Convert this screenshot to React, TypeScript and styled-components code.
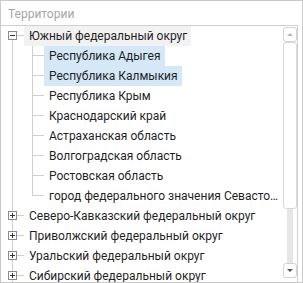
import React from "react";
import styled, { createGlobalStyle } from "styled-components";

const GlobalStyle = createGlobalStyle`
  body {
    margin: 0;
    background: #fff;
  }
  * {
    box-sizing: border-box;
  }
`;

const Frame = styled.div`
  width: 303px;
  height: 283px;
  border: 1px solid #c9c9c9;
  display: flex;
  flex-direction: column;
  background: #fff;
  font-family: Roboto, "Noto Sans", sans-serif;
`;

const Caption = styled.div`
  height: 24px;
  padding: 3px 0 0 7px;
  font-size: 12px;
  line-height: 20px;
  color: #a6a6a6;
`;

const Panel = styled.div`
  flex: 1;
  min-height: 0;
  margin-right: 4px;
  border-top: 1px solid #d0d0d0;
  border-right: 1px solid #d0d0d0;
  display: flex;
`;

const TreeArea = styled.div`
  flex: 1;
  min-width: 0;
  overflow: hidden;
`;

const NodeList = styled.ul`
  list-style: none;
  margin: 0;
  padding: 0;
`;

const Node = styled.li<{ $level: number; $first: boolean; $last: boolean }>`
  position: relative;
  &::before {
    content: "";
    position: absolute;
    left: ${(p) => 11 + p.$level * 20}px;
    top: ${(p) => (p.$first && p.$level === 0 ? "10px" : "0")};
    ${(p) => (p.$last ? "height: 10px;" : "bottom: 0;")}
    width: 1px;
    background: #cfcfcf;
  }
`;

const Row = styled.div<{ $level: number }>`
  display: flex;
  align-items: center;
  height: 20px;
  padding-left: ${(p) => p.$level * 20}px;
`;

const Gutter = styled.span`
  position: relative;
  flex: none;
  width: 23px;
  height: 20px;
  &::after {
    content: "";
    position: absolute;
    left: 12px;
    top: 9px;
    width: 11px;
    height: 1px;
    background: #cfcfcf;
  }
`;

const Expander = styled.span<{ $open: boolean }>`
  position: absolute;
  left: 7px;
  top: 5px;
  width: 9px;
  height: 9px;
  border: 1px solid #8a8a8a;
  background: #fff;
  z-index: 1;
  &::before {
    content: "";
    position: absolute;
    left: 1px;
    top: 3px;
    width: 5px;
    height: 1px;
    background: #333;
  }
  &::after {
    content: "";
    display: ${(p) => (p.$open ? "none" : "block")};
    position: absolute;
    left: 3px;
    top: 1px;
    width: 1px;
    height: 5px;
    background: #333;
  }
`;

const Label = styled.span<{ $tone?: "hover" | "selected" }>`
  min-width: 0;
  height: 20px;
  line-height: 20px;
  padding: 0 4px 0 5px;
  font-size: 12px;
  color: #1f1f1f;
  white-space: nowrap;
  overflow: hidden;
  text-overflow: ellipsis;
  background: ${(p) =>
    p.$tone === "selected" ? "#d5e8f7" : p.$tone === "hover" ? "#f2f2f2" : "transparent"};
`;

const ScrollBar = styled.div`
  flex: none;
  width: 14px;
  display: flex;
  flex-direction: column;
  align-items: center;
  padding: 1px 0 4px;
`;

const ScrollButton = styled.div<{ $dir: "up" | "down" }>`
  flex: none;
  width: 14px;
  height: 15px;
  border: 1px solid #d3d3d3;
  border-radius: 3px;
  background: #fff;
  display: flex;
  align-items: center;
  justify-content: center;
  &::before {
    content: "";
    border-left: 3px solid transparent;
    border-right: 3px solid transparent;
    ${(p) =>
      p.$dir === "up"
        ? "border-bottom: 3px solid #b8b8b8;"
        : "border-top: 3px solid #555;"}
  }
`;

const Thumb = styled.div`
  flex: none;
  width: 14px;
  height: 167px;
  border: 1px solid #d8d8d8;
  border-radius: 3px;
  background: #fff;
`;

const Track = styled.div`
  flex: 1;
  width: 6px;
  background: #e6e6e6;
`;

interface TreeItem {
  label: string;
  open?: boolean;
  tone?: "hover" | "selected";
  children?: TreeItem[];
}

const territories: TreeItem[] = [
  {
    label: "Южный федеральный округ",
    open: true,
    tone: "hover",
    children: [
      { label: "Республика Адыгея", tone: "selected" },
      { label: "Республика Калмыкия", tone: "selected" },
      { label: "Республика Крым" },
      { label: "Краснодарский край" },
      { label: "Астраханская область" },
      { label: "Волгоградская область" },
      { label: "Ростовская область" },
      { label: "город федерального значения Севастополь" },
    ],
  },
  { label: "Северо-Кавказский федеральный округ", children: [] },
  { label: "Приволжский федеральный округ", children: [] },
  { label: "Уральский федеральный округ", children: [] },
  { label: "Сибирский федеральный округ", children: [] },
  { label: "Дальневосточный федеральный округ", children: [] },
  { label: "Центральный федеральный округ", children: [] },
  { label: "Северо-Западный федеральный округ", children: [] },
];

const TreeNodes: React.FC<{ items: TreeItem[]; level: number }> = ({ items, level }) => (
  <NodeList>
    {items.map((item, i) => (
      <Node key={item.label} $level={level} $first={i === 0} $last={i === items.length - 1}>
        <Row $level={level}>
          <Gutter>{item.children && <Expander $open={!!item.open} />}</Gutter>
          <Label $tone={item.tone}>{item.label}</Label>
        </Row>
        {item.open && item.children && <TreeNodes items={item.children} level={level + 1} />}
      </Node>
    ))}
  </NodeList>
);

export default function App() {
  return (
    <>
      <GlobalStyle />
      <Frame>
        <Caption>Территории</Caption>
        <Panel>
          <TreeArea>
            <TreeNodes items={territories} level={0} />
          </TreeArea>
          <ScrollBar>
            <ScrollButton $dir="up" />
            <Thumb />
            <Track />
            <ScrollButton $dir="down" />
          </ScrollBar>
        </Panel>
      </Frame>
    </>
  );
}
